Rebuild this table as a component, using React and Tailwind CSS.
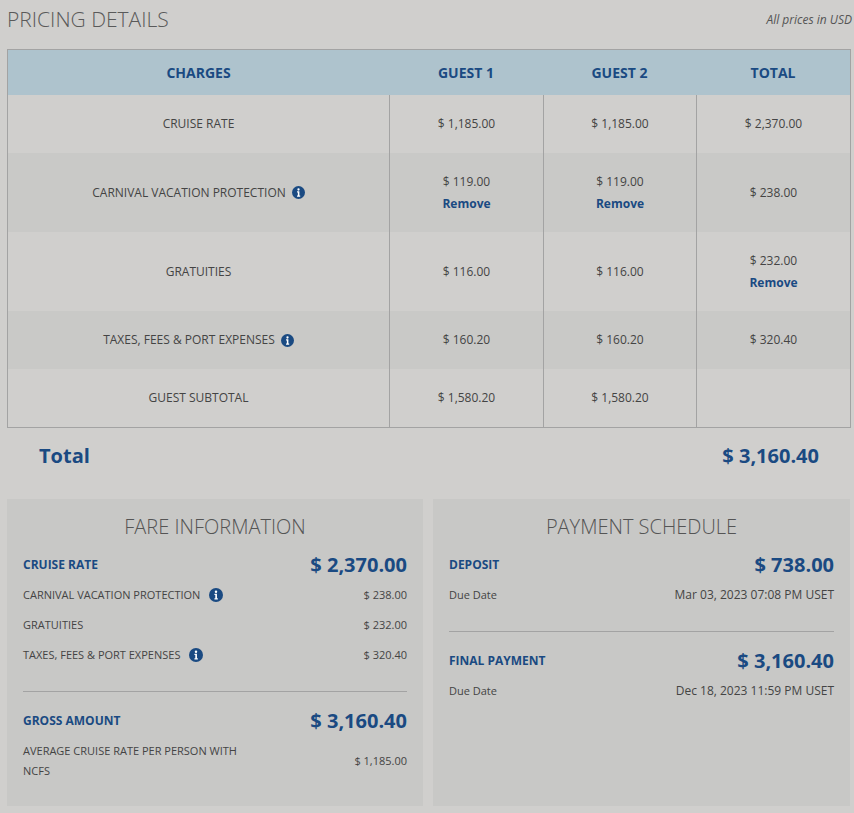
import React from 'react'

const blue = 'text-[#1a4a82]'

const Info = ({ className = '' }) => (
  <svg viewBox="0 0 16 16" className={`inline-block w-[13px] h-[13px] ${className}`}>
    <circle cx="8" cy="8" r="8" fill="#1a4a82" />
    <circle cx="8" cy="4.3" r="1.4" fill="#fff" />
    <path d="M6.2 6.6h2.9v5.2h1v1.3H6.2v-1.3h1v-3.9h-1z" fill="#fff" />
  </svg>
)

const Remove = () => <div className={`font-bold ${blue} mt-[4px]`}>Remove</div>

const rows = [
  { label: 'CRUISE RATE', g1: '$ 1,185.00', g2: '$ 1,185.00', total: '$ 2,370.00', h: 'h-[58px]' },
  { label: 'CARNIVAL VACATION PROTECTION', info: true, g1: '$ 119.00', g2: '$ 119.00', total: '$ 238.00', h: 'h-[79px]', dark: true, rm: 'guests' },
  { label: 'GRATUITIES', g1: '$ 116.00', g2: '$ 116.00', total: '$ 232.00', h: 'h-[79px]', rm: 'total' },
  { label: 'TAXES, FEES & PORT EXPENSES', info: true, g1: '$ 160.20', g2: '$ 160.20', total: '$ 320.40', h: 'h-[58px]', dark: true },
  { label: 'GUEST SUBTOTAL', g1: '$ 1,580.20', g2: '$ 1,580.20', total: '', h: 'h-[58px]' },
]

const Cell = ({ children, first }) => (
  <div className={`flex flex-col items-center justify-center ${first ? '' : 'border-l border-[#a3a3a3]'}`}>
    {children}
  </div>
)

const Line = ({ label, value, info, date }) => (
  <div className="flex justify-between items-center h-[30px] text-[11px] text-[#444]">
    <span className="flex items-center gap-[9px]">{label}{info && <Info className="w-[14px] h-[14px]" />}</span>
    <span className={date ? 'text-[12px]' : ''}>{value}</span>
  </div>
)

const Big = ({ label, value }) => (
  <div className={`flex justify-between items-center h-[30px] ${blue} font-bold`}>
    <span className="text-[12px]">{label}</span>
    <span className="text-[20px]">{value}</span>
  </div>
)

const App = () => {
  return (
    <div className="min-h-[813px] bg-[#d0cfcd] pl-[7px] pr-[3px] pt-[5px] pb-[7px] font-['Open_Sans','Liberation_Sans',sans-serif] text-[#444]">
      <div className="flex justify-between items-center h-[30px]">
        <h1 className="text-[21px] font-light text-[#5a5a5a]">PRICING DETAILS</h1>
        <span className="text-[12px] italic text-[#555] -mr-[1px]">All prices in USD</span>
      </div>

      <div className="mt-[14px] border border-[#a3a3a3]">
        <div className={`grid grid-cols-[381px_154px_153px_1fr] h-[45px] items-center bg-[#aec3cd] text-[14px] font-bold ${blue} text-center`}>
          <div>CHARGES</div>
          <div>GUEST 1</div>
          <div>GUEST 2</div>
          <div>TOTAL</div>
        </div>
        {rows.map((r) => (
          <div key={r.label} className={`grid grid-cols-[381px_154px_153px_1fr] ${r.h} text-[12px] text-[#444] ${r.dark ? 'bg-[#c9c9c7]' : ''}`}>
            <Cell first>
              <span className="flex items-center gap-[6px]">{r.label}{r.info && <Info />}</span>
            </Cell>
            <Cell>
              <span>{r.g1}</span>
              {r.rm === 'guests' && <Remove />}
            </Cell>
            <Cell>
              <span>{r.g2}</span>
              {r.rm === 'guests' && <Remove />}
            </Cell>
            <Cell>
              <span>{r.total}</span>
              {r.rm === 'total' && <Remove />}
            </Cell>
          </div>
        ))}
      </div>

      <div className={`flex justify-between items-center h-[56px] pl-[32px] pr-[32px] ${blue} font-bold text-[20px]`}>
        <span>Total</span>
        <span>$ 3,160.40</span>
      </div>

      <div className="mt-[15px] grid grid-cols-[416px_417px] gap-[10px]">
        <div className="bg-[#c8c8c6] h-[307px] px-[16px] pt-[14px]">
          <h2 className="text-center text-[20px] font-light text-[#555] h-[28px] leading-[28px]">FARE INFORMATION</h2>
          <div className="mt-[9px]">
            <Big label="CRUISE RATE" value="$ 2,370.00" />
            <Line label="CARNIVAL VACATION PROTECTION" value="$ 238.00" info />
            <Line label="GRATUITIES" value="$ 232.00" />
            <Line label="TAXES, FEES & PORT EXPENSES" value="$ 320.40" info />
          </div>
          <div className="mt-[21px] border-t border-[#a3a3a3]" />
          <div className="mt-[14px]">
            <Big label="GROSS AMOUNT" value="$ 3,160.40" />
            <div className="flex justify-between items-center text-[11px] text-[#444] mt-[5px]">
              <span className="leading-[20px] w-[230px]">AVERAGE CRUISE RATE PER PERSON WITH NCFS</span>
              <span>$ 1,185.00</span>
            </div>
          </div>
        </div>

        <div className="bg-[#c8c8c6] h-[307px] px-[16px] pt-[14px]">
          <h2 className="text-center text-[20px] font-light text-[#555] h-[28px] leading-[28px]">PAYMENT SCHEDULE</h2>
          <div className="mt-[9px]">
            <Big label="DEPOSIT" value="$ 738.00" />
            <Line label="Due Date" value="Mar 03, 2023 07:08 PM USET" date />
          </div>
          <div className="mt-[21px] border-t border-[#a3a3a3]" />
          <div className="mt-[14px]">
            <Big label="FINAL PAYMENT" value="$ 3,160.40" />
            <Line label="Due Date" value="Dec 18, 2023 11:59 PM USET" date />
          </div>
        </div>
      </div>
    </div>
  )
}

export default App
